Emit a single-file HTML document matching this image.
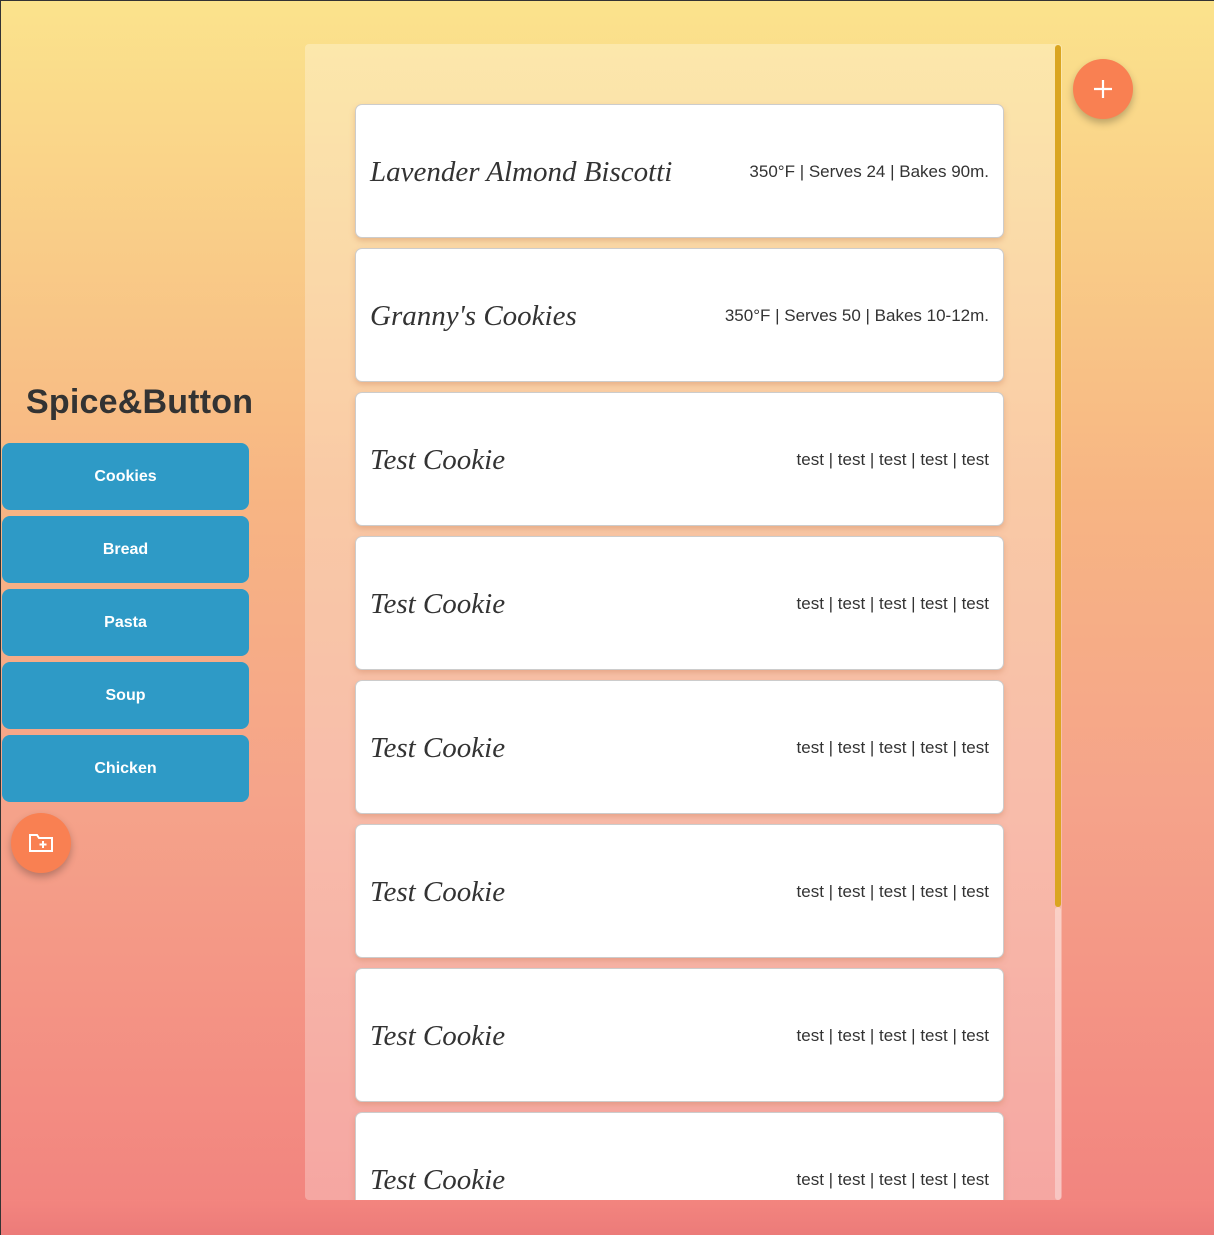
<!DOCTYPE html>
<html><head><meta charset="utf-8"><style>
*{margin:0;padding:0;box-sizing:border-box}
html,body{width:1214px;height:1235px;overflow:hidden}
body{background:linear-gradient(180deg,#fbe38c 0%,#f7b583 40%,#f5a38a 65%,#f2827e 100%);font-family:"Liberation Sans",sans-serif;position:relative}
.bl{position:absolute;left:0;top:0;width:1px;height:1235px;background:#333}
.bt{position:absolute;left:0;top:0;width:1214px;height:1px;background:#333}
.bottom{position:absolute;left:0;top:1200px;width:1214px;height:35px;background:linear-gradient(180deg,#f3857f,#ec7b79)}
h1{position:absolute;left:26px;top:383px;font-size:34px;font-weight:bold;color:#333;letter-spacing:0.2px}
.btn{position:absolute;left:2px;width:247px;height:67px;background:#2e9ac6;border-radius:8px;color:#fff;font-weight:bold;font-size:16px;display:flex;align-items:center;justify-content:center}
.fab{position:absolute;width:60px;height:60px;border-radius:50%;background:#f98052;box-shadow:0 4px 8px rgba(0,0,0,.25);display:flex;align-items:center;justify-content:center}
.panel{position:absolute;left:305px;top:44px;width:757px;height:1156px;background:rgba(255,255,255,0.28);border-radius:4px;overflow:hidden}
.thumb{position:absolute;left:1055px;top:45px;width:6px;height:862px;background:#daa520;border-radius:3px}
.track{position:absolute;left:1055px;top:907px;width:6px;height:293px;background:rgba(255,255,255,0.35);border-radius:3px}
.card{position:absolute;left:50px;width:649px;height:134px;background:#fff;border:1px solid #ccc;border-radius:7px;box-shadow:0 3px 6px rgba(200,120,80,.35)}
.t{position:absolute;left:14px;top:51px;font-family:"Liberation Serif",serif;font-style:italic;font-size:29px;color:#333}
.i{position:absolute;right:14px;top:57px;font-size:17px;color:#333}
</style></head><body>
<div class="panel">
<div class="card" style="top:60px"><div class="t">Lavender Almond Biscotti</div><div class="i">350°F | Serves 24 | Bakes 90m.</div></div>
<div class="card" style="top:204px"><div class="t">Granny's Cookies</div><div class="i">350°F | Serves 50 | Bakes 10-12m.</div></div>
<div class="card" style="top:348px"><div class="t">Test Cookie</div><div class="i">test | test | test | test | test</div></div>
<div class="card" style="top:492px"><div class="t">Test Cookie</div><div class="i">test | test | test | test | test</div></div>
<div class="card" style="top:636px"><div class="t">Test Cookie</div><div class="i">test | test | test | test | test</div></div>
<div class="card" style="top:780px"><div class="t">Test Cookie</div><div class="i">test | test | test | test | test</div></div>
<div class="card" style="top:924px"><div class="t">Test Cookie</div><div class="i">test | test | test | test | test</div></div>
<div class="card" style="top:1068px"><div class="t">Test Cookie</div><div class="i">test | test | test | test | test</div></div>
</div>
<div class="thumb"></div><div class="track"></div>
<div class="bottom"></div>
<div class="bl"></div><div class="bt"></div>
<h1>Spice&amp;Button</h1>
<div class="btn" style="top:443px">Cookies</div>
<div class="btn" style="top:516px">Bread</div>
<div class="btn" style="top:589px">Pasta</div>
<div class="btn" style="top:662px">Soup</div>
<div class="btn" style="top:735px">Chicken</div>
<div class="fab" style="left:11px;top:813px"><svg width="26" height="22" viewBox="0 0 26 22" fill="none" stroke="#fff" stroke-width="2"><path d="M2 3h7l2 3h13v13H2z"/><path d="M15 9v7M11.5 12.5h7"/></svg></div>
<div class="fab" style="left:1073px;top:59px"><svg width="22" height="22" viewBox="0 0 22 22" stroke="#fff" stroke-width="2.2"><path d="M11 2v18M2 11h18"/></svg></div>
</body></html>
